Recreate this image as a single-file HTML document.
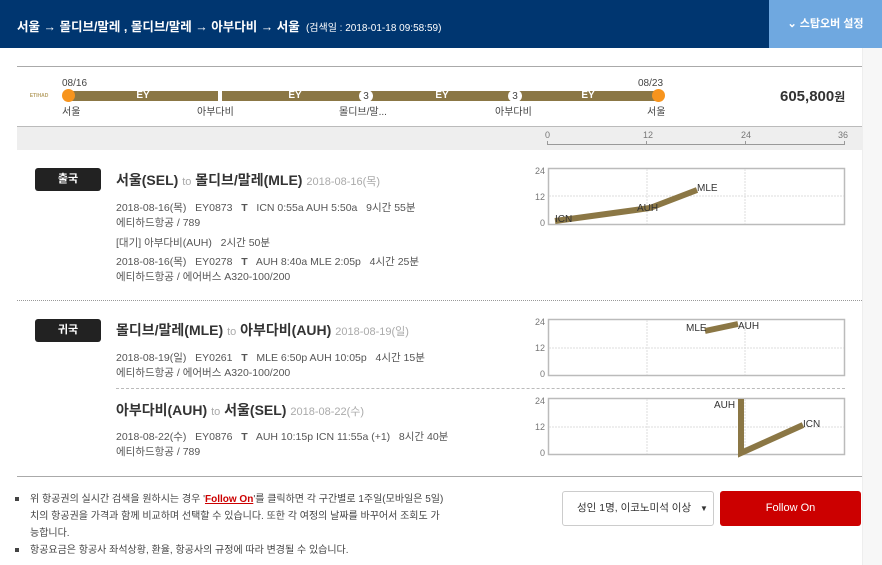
<!DOCTYPE html>
<html><head><meta charset="utf-8"><style>
*{margin:0;padding:0;box-sizing:border-box}
body{width:882px;height:565px;background:#fff;font-family:"Liberation Sans","Noto Sans CJK KR",sans-serif;color:#333;position:relative;overflow:hidden}
.a{position:absolute;white-space:nowrap}
.hd{left:0;top:0;width:882px;height:48px;background:#003670}
.sb{left:769px;top:0;width:113px;height:48px;background:#6fa8e0;color:#fff;font-size:11px;font-weight:bold;text-align:center;line-height:48px}
.bar{height:10px;background:#8b7745;color:#fff;font-size:10px;font-weight:bold;text-align:center;line-height:10px;top:91px}
.dot{width:13px;height:13px;border-radius:50%;background:#f7941d;top:89px}
.st{font-size:10px;color:#444;top:103px}
.n3{top:90px;width:14px;height:12px;border-radius:6px;background:#fff;font-size:10px;text-align:center;line-height:13px;color:#444}
.badge{left:35px;width:66px;height:23px;background:#222;border-radius:3px;color:#fff;font-size:11px;font-weight:bold;text-align:center;line-height:23px}
.tt{font-size:14px;font-weight:bold;color:#333}
.tt small{font-size:11px;font-weight:normal;color:#aaa}
.d{font-size:10.5px;color:#555}
.ax{font-size:9px;color:#777}
</style></head><body>
<div class="a hd"></div>
<div class="a" style="left:17px;top:16px;color:#fff;font-size:12.5px;font-weight:bold">서울 → 몰디브/말레 , 몰디브/말레 → 아부다비 → 서울 <span style="font-size:10px;font-weight:normal">&nbsp;(검색일 : 2018-01-18 09:58:59)</span></div>
<div class="a sb">&#x2304; 스탑오버 설정</div>
<div class="a" style="left:862px;top:48px;width:20px;height:517px;background:#f7f7f7;border-left:1px solid #eee"></div>

<div class="a" style="left:17px;top:66px;width:845px;height:1px;background:#aaa"></div>
<div class="a" style="left:27px;top:92px;width:24px;height:8px;color:#b9a36a;font-size:5px;font-weight:bold;text-align:center;line-height:8px">ETIHAD</div>
<div class="a" style="left:62px;top:78px;font-size:10px;color:#444">08/16</div>
<div class="a" style="left:638px;top:78px;font-size:10px;color:#444">08/23</div>
<div class="a bar" style="left:68px;width:150px">EY</div>
<div class="a bar" style="left:222px;width:146px">EY</div>
<div class="a bar" style="left:368px;width:148px">EY</div>
<div class="a bar" style="left:516px;width:144px">EY</div>
<div class="a n3" style="left:359px">3</div>
<div class="a n3" style="left:508px">3</div>
<div class="a dot" style="left:62px"></div>
<div class="a dot" style="left:652px"></div>
<div class="a st" style="left:62px">서울</div>
<div class="a st" style="left:197px">아부다비</div>
<div class="a st" style="left:339px">몰디브/말...</div>
<div class="a st" style="left:495px">아부다비</div>
<div class="a st" style="left:647px">서울</div>
<div class="a" style="left:780px;top:88px;font-size:15px;font-weight:bold;color:#333">605,800<span style="font-size:12px">원</span></div>

<div class="a" style="left:17px;top:126px;width:845px;height:24px;background:#eee;border-top:1px solid #bbb"></div>
<div class="a ax" style="left:545px;top:130px">0</div>
<div class="a ax" style="left:643px;top:130px">12</div>
<div class="a ax" style="left:741px;top:130px">24</div>
<div class="a ax" style="left:838px;top:130px">36</div>
<div class="a" style="left:547px;top:144px;width:298px;height:1px;background:#999"></div>
<div class="a" style="left:547px;top:141px;width:1px;height:4px;background:#999"></div>
<div class="a" style="left:646px;top:141px;width:1px;height:4px;background:#999"></div>
<div class="a" style="left:745px;top:141px;width:1px;height:4px;background:#999"></div>
<div class="a" style="left:844px;top:141px;width:1px;height:4px;background:#999"></div>

<div class="a badge" style="top:168px">출국</div>
<div class="a tt" style="left:116px;top:170px">서울(SEL) <small>to</small> 몰디브/말레(MLE) <small>2018-08-16(목)</small></div>
<div class="a d" style="left:116px;top:200px">2018-08-16(목) &nbsp; EY0873 &nbsp; <b>T</b> &nbsp; ICN 0:55a AUH 5:50a &nbsp; 9시간 55분</div>
<div class="a d" style="left:116px;top:215px">에티하드항공 / 789</div>
<div class="a d" style="left:116px;top:235px">[대기] 아부다비(AUH) &nbsp; 2시간 50분</div>
<div class="a d" style="left:116px;top:254px">2018-08-16(목) &nbsp; EY0278 &nbsp; <b>T</b> &nbsp; AUH 8:40a MLE 2:05p &nbsp; 4시간 25분</div>
<div class="a d" style="left:116px;top:269px">에티하드항공 / 에어버스 A320-100/200</div>

<div class="a" style="left:17px;top:300px;width:845px;border-top:1px dotted #999"></div>

<div class="a badge" style="top:319px">귀국</div>
<div class="a tt" style="left:116px;top:320px">몰디브/말레(MLE) <small>to</small> 아부다비(AUH) <small>2018-08-19(일)</small></div>
<div class="a d" style="left:116px;top:350px">2018-08-19(일) &nbsp; EY0261 &nbsp; <b>T</b> &nbsp; MLE 6:50p AUH 10:05p &nbsp; 4시간 15분</div>
<div class="a d" style="left:116px;top:365px">에티하드항공 / 에어버스 A320-100/200</div>
<div class="a" style="left:116px;top:388px;width:729px;border-top:1px dashed #bbb"></div>
<div class="a tt" style="left:116px;top:400px">아부다비(AUH) <small>to</small> 서울(SEL) <small>2018-08-22(수)</small></div>
<div class="a d" style="left:116px;top:429px">2018-08-22(수) &nbsp; EY0876 &nbsp; <b>T</b> &nbsp; AUH 10:15p ICN 11:55a (+1) &nbsp; 8시간 40분</div>
<div class="a d" style="left:116px;top:444px">에티하드항공 / 789</div>

<svg class="a" style="left:520px;top:160px" width="340" height="310" font-family="Liberation Sans" font-size="9">
<g fill="#fff" stroke="#bbb" stroke-width="1.5">
<rect x="28.5" y="8.5" width="296" height="56"/>
<rect x="28.5" y="159.5" width="296" height="56"/>
<rect x="28.5" y="238.5" width="296" height="56"/>
</g>
<g stroke="#ddd" stroke-dasharray="2,1">
<line x1="127" y1="9" x2="127" y2="64"/><line x1="225" y1="9" x2="225" y2="64"/><line x1="29" y1="36" x2="324" y2="36"/>
<line x1="127" y1="160" x2="127" y2="215"/><line x1="225" y1="160" x2="225" y2="215"/><line x1="29" y1="188" x2="324" y2="188"/>
<line x1="127" y1="239" x2="127" y2="294"/><line x1="225" y1="239" x2="225" y2="294"/><line x1="29" y1="267" x2="324" y2="267"/>
</g>
<g fill="#777" text-anchor="end">
<text x="25" y="14">24</text><text x="25" y="40">12</text><text x="25" y="66">0</text>
<text x="25" y="165">24</text><text x="25" y="191">12</text><text x="25" y="217">0</text>
<text x="25" y="244">24</text><text x="25" y="270">12</text><text x="25" y="296">0</text>
</g>
<g stroke="#8b7745" stroke-width="6" fill="none">
<polyline points="35,61 130,48 177,30"/>
<line x1="185" y1="171" x2="218" y2="164"/>
<polyline points="221,239 221,293 283,265"/>
</g>
<g fill="#333" font-size="10">
<text x="35" y="62">ICN</text><text x="117" y="51">AUH</text><text x="177" y="31">MLE</text>
<text x="166" y="171">MLE</text><text x="218" y="169">AUH</text>
<text x="194" y="248">AUH</text><text x="283" y="267">ICN</text>
</g>
</svg>

<div class="a" style="left:17px;top:476px;width:845px;height:1px;background:#aaa"></div>
<div class="a" style="left:15px;top:491px;font-size:10px;color:#444;line-height:17px;white-space:normal;width:430px">
<div style="position:relative;padding-left:15px"><span style="position:absolute;left:0;top:6px;width:4px;height:4px;background:#444"></span>위 항공권의 실시간 검색을 원하시는 경우 '<b style="color:#c00;text-decoration:underline">Follow On</b>'를 클릭하면 각 구간별로 1주일(모바일은 5일)치의 항공권을 가격과 함께 비교하며 선택할 수 있습니다. 또한 각 여정의 날짜를 바꾸어서 조회도 가능합니다.</div>
<div style="position:relative;padding-left:15px"><span style="position:absolute;left:0;top:6px;width:4px;height:4px;background:#444"></span>항공요금은 항공사 좌석상황, 환율, 항공사의 규정에 따라 변경될 수 있습니다.</div>
</div>
<div class="a" style="left:562px;top:491px;width:152px;height:35px;border:1px solid #ccc;border-radius:3px;font-size:10.5px;color:#333;line-height:33px;padding-left:14px">성인 1명, 이코노미석 이상 <span style="font-size:8px;margin-left:6px">▼</span></div>
<div class="a" style="left:720px;top:491px;width:141px;height:35px;background:#cc0000;border-radius:3px;color:#fff;font-size:11px;text-align:center;line-height:35px">Follow On</div>
</body></html>
